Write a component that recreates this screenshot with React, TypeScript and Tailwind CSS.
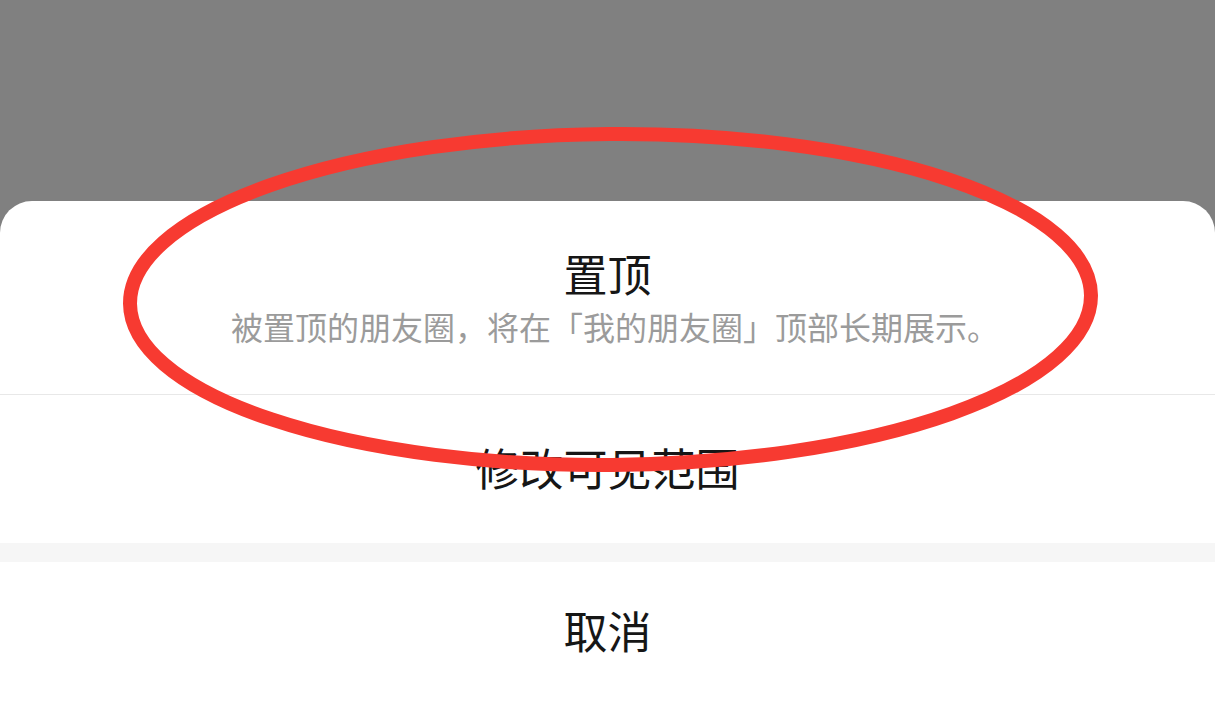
import React from "react";

const SUBTITLE = "被置顶的朋友圈，将在「我的朋友圈」顶部长期展示。";

export default function App() {
    return (
        <div className="relative flex h-[705px] w-full flex-col overflow-hidden bg-[#808080] font-['Noto_Sans_CJK_SC','Noto_Sans',sans-serif]">
            <div className="h-[201px] shrink-0" />
            <div className="flex flex-1 flex-col rounded-t-[32px] bg-white">
                <div className="flex h-[194px] shrink-0 flex-col items-center gap-[15px] border-b border-[#e8e8e8] pt-[50px]">
                    <div className="text-[44px] leading-none text-[#161616]">置顶</div>
                    <div className="pl-[15px] text-[32px] leading-none text-[#9b9b9b]">{SUBTITLE}</div>
                </div>
                <div className="flex h-[148px] shrink-0 items-center justify-center pb-[5px]">
                    <div className="text-[44px] leading-none text-[#161616]">修改可见范围</div>
                </div>
                <div className="h-[19px] shrink-0 bg-[#f6f6f6]" />
                <div className="flex flex-1 justify-center pt-[46px]">
                    <div className="text-[44px] leading-none text-[#161616]">取消</div>
                </div>
            </div>
            {/* hand-drawn annotation over the sheet */}
            <svg className="pointer-events-none absolute inset-0" width="1215" height="705" viewBox="0 0 1215 705">
                <ellipse
                    cx="610.5"
                    cy="299.5"
                    rx="480.5"
                    ry="165.5"
                    fill="none"
                    stroke="#f73a31"
                    strokeWidth="14"
                    transform="rotate(-0.5 610.5 299.5)"
                />
            </svg>
        </div>
    );
}
